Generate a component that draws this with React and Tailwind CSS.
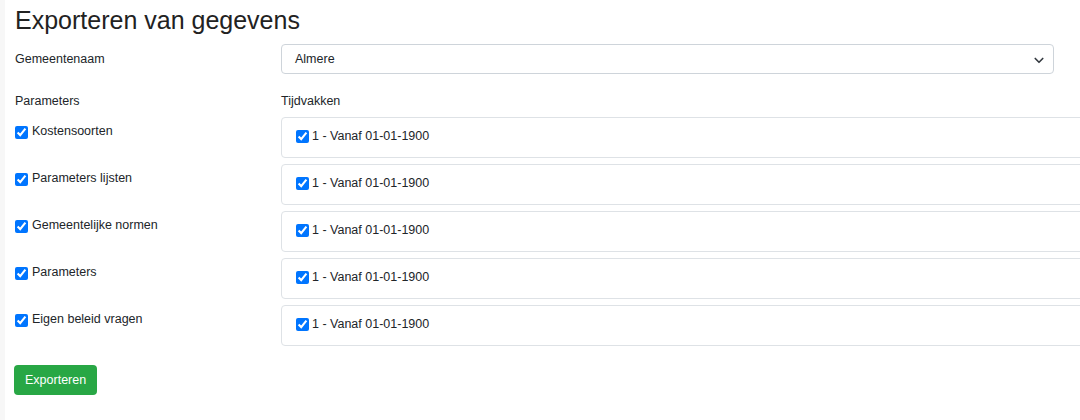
import React from 'react';

const rows = [
  'Kostensoorten',
  'Parameters lijsten',
  'Gemeentelijke normen',
  'Parameters',
  'Eigen beleid vragen',
];

const App = () => {
  return (
    <div className="w-[1080px] h-[420px] overflow-hidden bg-white border-l-[5px] border-[#f7f7f7] text-[#212529] text-[12.5px] font-['Liberation_Sans',Arial,sans-serif]">
      <div className="pl-[10px]">
        <h1 className="text-[25px] leading-[30px] pt-[5px] text-[#222]">Exporteren van gegevens</h1>

        <div className="flex items-center mt-[9px] h-[30px]">
          <label className="w-[266px] shrink-0">Gemeentenaam</label>
          <div className="relative w-[773px] h-[30px] border border-[#ced4da] rounded-[4px] flex items-center pl-[13px]">
            <span>Almere</span>
            <svg className="absolute right-[8px] top-[9px]" width="12" height="12" viewBox="0 0 16 16" fill="none" stroke="#343a40" strokeWidth="2.2" strokeLinecap="round" strokeLinejoin="round">
              <path d="M3 6l5 5 5-5" />
            </svg>
          </div>
        </div>

        <div className="flex mt-[20px] leading-[15px]">
          <div className="w-[266px] shrink-0">Parameters</div>
          <div>Tijdvakken</div>
        </div>

        <div className="flex flex-col gap-[6px] mt-[8px]">
          {rows.map((r) => (
            <div key={r} className="flex h-[41px]">
              <div className="w-[266px] shrink-0 pt-[6px]">
                <div className="flex items-center h-[17px]">
                  <input type="checkbox" defaultChecked className="w-[13px] h-[13px] m-0 mr-[4px] mt-[2px]" />
                  <span className="leading-[15px]">{r}</span>
                </div>
              </div>
              <div className="w-[900px] shrink-0 border border-[#dee2e6] rounded-[4px] flex items-center pl-[14px] pb-[3px]">
                <input type="checkbox" defaultChecked className="w-[13px] h-[13px] m-0 mr-[3px]" />
                <span>1 - Vanaf 01-01-1900</span>
              </div>
            </div>
          ))}
        </div>

        <button className="mt-[19px] h-[30px] px-[11px] rounded-[4px] bg-[#28a745] text-white text-[12.5px] leading-[30px] -ml-[1px]">
          Exporteren
        </button>
      </div>
    </div>
  );
};

export default App;
